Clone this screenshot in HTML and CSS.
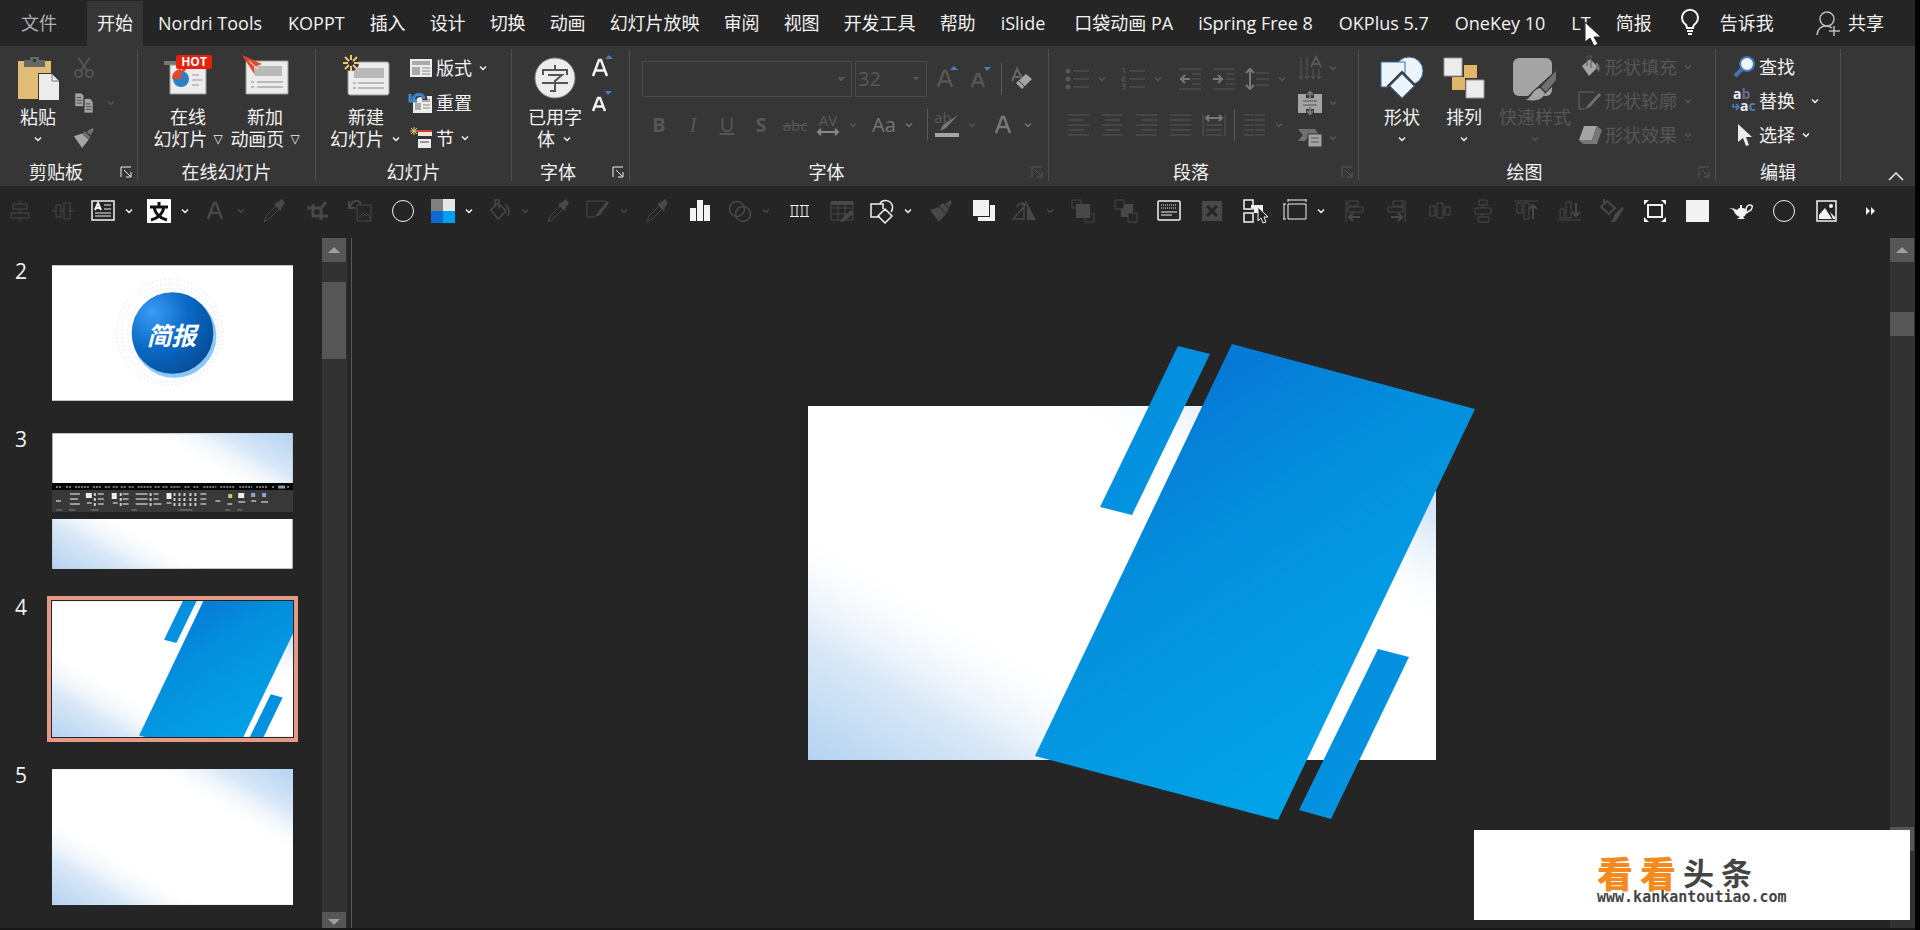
FILE: index.html
```html
<!DOCTYPE html>
<html lang="zh-CN">
<head>
    <meta charset="UTF-8">
    <meta name="viewport" content="width=device-width, initial-scale=1.0">
    <title>简报 - 演示文稿</title>
    <link rel="stylesheet" href="styles.css">
</head>
<body>
    <!-- 图标库 -->
    <svg class="sprite" aria-hidden="true">
        <defs>
            <linearGradient id="g-low" gradientUnits="userSpaceOnUse" x1="0" y1="354" x2="105" y2="174">
                <stop offset="0" stop-color="#b4d3f1"/>
                <stop offset="0.5" stop-color="#d9e8f7"/>
                <stop offset="1" stop-color="#ffffff" stop-opacity="0"/>
            </linearGradient>
            <linearGradient id="g-high" gradientUnits="userSpaceOnUse" x1="628" y1="0" x2="526" y2="171">
                <stop offset="0" stop-color="#b4d3f1"/>
                <stop offset="0.5" stop-color="#d9e8f7"/>
                <stop offset="1" stop-color="#ffffff" stop-opacity="0"/>
            </linearGradient>
            <linearGradient id="g-main" gradientUnits="userSpaceOnUse" x1="370" y1="0" x2="570" y2="310">
                <stop offset="0" stop-color="#067ad6"/>
                <stop offset="0.35" stop-color="#048fdd"/>
                <stop offset="1" stop-color="#02a2e8"/>
            </linearGradient>
            <linearGradient id="g-bar" x1="0" y1="0" x2="1" y2="1">
                <stop offset="0" stop-color="#0785db"/>
                <stop offset="1" stop-color="#029ce5"/>
            </linearGradient>
            <radialGradient id="g-ball" cx="0.25" cy="0.25" r="0.9">
                <stop offset="0" stop-color="#3b9af3"/>
                <stop offset="0.5" stop-color="#0a69c4"/>
                <stop offset="1" stop-color="#054a94"/>
            </radialGradient>
        </defs>

        <symbol id="slide-bg" viewBox="0 0 628 354">
            <rect width="628" height="354" fill="#fff"/>
            <rect width="628" height="354" fill="url(#g-low)"/>
            <rect width="628" height="354" fill="url(#g-high)"/>
        </symbol>
        <g id="slide-shapes">
            <polygon points="424,-62 667,3 470,414 227,350" fill="url(#g-main)"/>
            <polygon points="370,-60 402,-52 324,109 292,101" fill="url(#g-bar)"/>
            <polygon points="570,243 601,251 523,413 491,404" fill="url(#g-bar)"/>
        </g>

        <symbol id="chev" viewBox="0 0 12 12"><path d="M3 4.5 6 7.5 9 4.5" fill="none" stroke="currentColor" stroke-width="1.5"/></symbol>
        <symbol id="launch" viewBox="0 0 12 12"><path d="M1 11V1h10M4 4l6 6M11 6v5H6" fill="none" stroke="currentColor"/></symbol>

        <!-- 大图标 -->
        <symbol id="paste" viewBox="0 0 44 44">
            <path d="M2 5h33v38H2z" fill="#e0bd76"/><path d="M8 4h6V1h9v3h6v7H8z" fill="#666"/><path d="M17 3h3v3h-3z" fill="#363636"/>
            <path d="M22 17h16l6 7v21H22z" fill="#363636"/><path d="M23 18h13l7 7v19H23z" fill="#ececec"/><path d="M36 18v7h7" fill="none" stroke="#777"/>
        </symbol>
        <symbol id="newanim" viewBox="0 0 48 44">
            <path d="M5 5h42v33H5z" fill="#ececec" stroke="#999"/><path d="M14 10h27v10H14z" fill="#b9b9b9"/>
            <path d="M10 26h3M16 26h26M10 31h3M16 31h26" stroke="#888"/>
            <path d="M1-1l20 9-8 3 1 8z" fill="#e0492a"/><path d="M8 5l9 8" stroke="#fff"/>
        </symbol>
        <symbol id="newslide" viewBox="0 0 48 44">
            <rect x="6" y="6" width="41" height="33" rx="2" fill="#ececec" stroke="#999"/><path d="M12 12h30v10H12z" fill="#b9b9b9"/>
            <path d="M11 27h3M16 27h26M11 32h3M16 32h26" stroke="#888"/>
            <circle cx="9" cy="7" r="8" fill="#363636"/>
            <path d="M9-1v5M9 10v5M1 7h5M12 7h5M3 1l4 4M11 9l4 4M15 1l-4 4M7 9l-4 4" stroke="#efc873" stroke-width="2"/>
        </symbol>
        <symbol id="usedfont" viewBox="0 0 44 44">
            <circle cx="22" cy="22" r="20" fill="#ececec" stroke="#888"/>
            <path d="M22 9v4M10 19v-5h24v5M15 19h14l-7 6v10h-5M9 27h26" fill="none" stroke="#555" stroke-width="2"/>
        </symbol>
        <symbol id="shapes" viewBox="0 0 44 44">
            <circle cx="29" cy="15" r="14" fill="#edf4fb" stroke="#2e6da8"/><path d="M1 6h24v25H1z" fill="#edf4fb" stroke="#2e6da8"/>
            <path d="M22 16l14 14-14 14L8 30z" fill="#edf4fb" stroke="#363636" stroke-width="2"/><path d="M22 18l12 12-12 12-12-12z" fill="#edf4fb" stroke="#2e6da8"/>
        </symbol>
        <symbol id="arrange" viewBox="0 0 44 44">
            <path d="M22 9h13v13H22zM10 21h13v13H10z" fill="#e0b768"/><path d="M2 2h18v18H2zM24 24h18v18H24z" fill="#ececec" stroke="#999"/>
        </symbol>
        <symbol id="quick" viewBox="0 0 44 44">
            <rect width="39" height="38" rx="6" y="2" fill="#a4a4a4"/><path d="M44 13 40 30 25 45H10l10-10z" fill="#363636"/>
            <path d="M43 15v9L33 36l-5-5z" fill="#707070"/><path d="M27 32l5 5c-3 8-11 8-19 7 6-3 7-11 14-12z" fill="#a4a4a4"/>
        </symbol>

        <!-- 功能区小图标 -->
        <symbol id="cut" viewBox="0 0 24 24"><path d="M6 1l10 15M18 1 8 16" fill="none" stroke="currentColor" stroke-width="2"/><circle cx="6" cy="18" r="4" fill="none" stroke="currentColor" stroke-width="2"/><circle cx="18" cy="18" r="4" fill="none" stroke="currentColor" stroke-width="2"/></symbol>
        <symbol id="copy" viewBox="0 0 24 24"><path d="M2 1h7l3 3v12H2zM12 7h7l3 4v12H12z" fill="#a4a4a4" stroke="#363636"/><path d="M4 6h5M4 9h6M4 12h6M14 13h5M14 16h6M14 19h6" stroke="#444"/></symbol>
        <symbol id="painter" viewBox="0 0 24 24"><path d="M1 10l9-3 7 7-7 9z" fill="#a4a4a4"/><path d="M10 7l3-2 6 6-2 3zM15 5l6-4 2 2-4 6z" fill="#707070"/></symbol>
        <symbol id="layout" viewBox="0 0 24 24"><path d="M1 3h22v18H1z" fill="#ececec"/><path d="M3 5h18v4H3zM3 11h8v8H3z" fill="#aaa"/><path d="M13 12h8M13 15h8M13 18h8" stroke="#888"/></symbol>
        <symbol id="reset" viewBox="0 0 24 24"><path d="M4 5h19v17H4z" fill="#ececec"/><path d="M13 8h8v3h-8zM6 12h6v7H6z" fill="#aaa"/><path d="M14 14h7M14 17h7" stroke="#888"/><path d="M16 9c0-7-9-7-11-1" fill="none" stroke="#363636" stroke-width="5"/><path d="M15 8c0-6-9-6-11 0M1 3v7h7" fill="none" stroke="#3d87c9" stroke-width="3"/></symbol>
        <symbol id="section" viewBox="0 0 24 24"><path d="M9 5h14v5H9z" fill="#f7e3da"/><path d="M9 5h14" stroke="#c8472a" stroke-width="2"/><path d="M9 13h13v9H9z" fill="#ececec"/><path d="M11 16h9" stroke="#999" stroke-width="2"/><path d="M5 1v8M1 5h8M2 2l6 6M8 2l-6 6" stroke="#efc873"/></symbol>
        <symbol id="grow" viewBox="0 0 24 24"><path d="M3 20 9 4h2l6 16M5.500 14.500h9" fill="none" stroke="currentColor" stroke-width="2.500"/><path d="M15 3l4-4 4 4z" class="mark"/></symbol>
        <symbol id="shrink" viewBox="0 0 24 24"><path d="M3 20 8 7h2l5 13M5.500 15.500h7" fill="none" stroke="currentColor" stroke-width="2.500"/><path d="M15 0h7l-4 4z" class="mark"/></symbol>
        <symbol id="erase" viewBox="0 0 24 24"><path d="M2 14 7 2l5 9M4 10h6" fill="none" stroke="#666" stroke-width="2"/><path d="M6 16 16 7l6 5-10 10z" fill="#a4a4a4"/><path d="M9 14l6 6" stroke="#363636"/></symbol>
        <symbol id="bullets" viewBox="0 0 24 24"><path d="M8 4h16M8 12h16M8 20h16" stroke="currentColor"/><circle cx="3" cy="4" r="2.500" fill="currentColor"/><circle cx="3" cy="12" r="2.500" fill="currentColor"/><circle cx="3" cy="20" r="2.500" fill="currentColor"/></symbol>
        <symbol id="numbers" viewBox="0 0 24 24"><path d="M8 4h16M8 12h16M8 20h16M1 2l2-1v6M1 10h3v2H1v2h4M1 17h3v5H1M1 19h3" fill="none" stroke="currentColor"/></symbol>
        <symbol id="outdent" viewBox="0 0 24 24"><path d="M1 2h22M14 7h9M14 12h9M14 17h9M1 22h22" stroke="currentColor"/><path d="M12 12H2M7 8l-4 4 4 4" fill="none" stroke="#777" stroke-width="2"/></symbol>
        <symbol id="indent" viewBox="0 0 24 24"><path d="M1 2h22M14 7h9M14 12h9M14 17h9M1 22h22" stroke="currentColor"/><path d="M1 12h10M6 8l4 4-4 4" fill="none" stroke="#777" stroke-width="2"/></symbol>
        <symbol id="lines" viewBox="0 0 24 24"><path d="M11 6h13M11 12h13M11 18h13" stroke="currentColor"/><path d="M5 2v20M1 6l4-4 4 4M1 18l4 4 4-4" fill="none" stroke="#777" stroke-width="2"/></symbol>
        <symbol id="al" viewBox="0 0 24 24"><path d="M2 2h21M2 7h16M2 12h21M2 17h16M2 22h21" stroke="currentColor"/></symbol>
        <symbol id="ac" viewBox="0 0 24 24"><path d="M2 2h21M5 7h15M2 12h21M5 17h15M2 22h21" stroke="currentColor"/></symbol>
        <symbol id="ar" viewBox="0 0 24 24"><path d="M2 2h21M7 7h16M2 12h21M7 17h16M2 22h21" stroke="currentColor"/></symbol>
        <symbol id="aj" viewBox="0 0 24 24"><path d="M2 2h21M2 7h21M2 12h21M2 17h21M2 22h21" stroke="currentColor"/></symbol>
        <symbol id="ad" viewBox="0 0 24 24"><path d="M1 1v22M23 1v22M4 12h16M4 17h16M4 22h16" stroke="currentColor"/><path d="M4 5h16M7 2 4 5l3 3M17 2l3 3-3 3" fill="none" stroke="#777" stroke-width="2"/></symbol>
        <symbol id="cols" viewBox="0 0 24 24"><path d="M2 2h10M13 2h10M2 7h10M13 7h10M2 12h10M13 12h10M2 17h10M13 17h10M2 22h10M13 22h10" stroke="currentColor"/></symbol>
        <symbol id="textdir" viewBox="0 0 24 24"><path d="M3 1v22M9 1v22M15 13v10M21 13v10M1 20l2 3 2-3M7 20l2 3 2-3M13 20l2 3 2-3M19 20l2 3 2-3" fill="none" stroke="currentColor"/><path d="M13 11l5-10 5 10M15 8h6" fill="none" stroke="currentColor" stroke-width="2"/></symbol>
        <symbol id="textalign" viewBox="0 0 24 24"><path d="M0 3h8v4h8V3h8v19h-8v-4H8v4H0z" fill="#a4a4a4"/><path d="M5 10h14M5 14h14" stroke="#555"/><path d="M12 8V1M9 4l3-3 3 3M12 16v7M9 20l3 3 3-3" fill="none" stroke="#777" stroke-width="2"/></symbol>
        <symbol id="smart" viewBox="0 0 24 24"><path d="M0 3h17l6 8H10l-3 4H0l5-6z" fill="#707070"/><path d="M10 8h14v13H10z" fill="#a4a4a4" stroke="#363636"/><path d="M13 12h8M13 16h8" stroke="#555"/></symbol>
        <symbol id="fill" viewBox="0 0 24 24"><path d="M4 11 12 4l8 8-9 9z" fill="#a4a4a4"/><path d="M9 11V1h4v12" fill="none" stroke="#555"/><path d="M18 7q5 3 3 10l-3-4z" fill="#777"/></symbol>
        <symbol id="outline" viewBox="0 0 24 24"><path d="M16 3H1v17h6" fill="none" stroke="#666"/><path d="M21 4 10 16l-3 4 5-2L23 6z" fill="#707070"/></symbol>
        <symbol id="effect" viewBox="0 0 24 24"><path d="M6 3h13l-5 14H1z" fill="#a4a4a4"/><path d="M19 3l5 4-5 14-5-4zM1 17h13l5 4H5z" fill="#777"/></symbol>
        <symbol id="find" viewBox="0 0 24 24"><path d="M11 13 3 21" stroke="#3f75b3" stroke-width="4"/><circle cx="15" cy="9" r="7" fill="#eef5fd" stroke="#3f75b3" stroke-width="2"/></symbol>
        <symbol id="pointer" viewBox="0 0 24 24"><path d="M6 1v18l5-4 3 8 3-1-3-8h6z" fill="#ececec"/></symbol>

        <!-- 快速访问工具栏图标 -->
        <symbol id="q-alignc" viewBox="0 0 24 24"><path d="M12 1v4M12 10v4M12 19v4M5 5h14v5H5zM3 14h18v5H3z" fill="none" stroke="currentColor"/></symbol>
        <symbol id="q-alignm" viewBox="0 0 24 24"><path d="M1 12h3M10 12h3M18 12h5M5 6h5v12H5zM13 4h6v16h-6z" fill="none" stroke="currentColor"/></symbol>
        <symbol id="q-textbox" viewBox="0 0 24 24"><path d="M1 2h22v19H1z" fill="none" stroke="currentColor" stroke-width="1.500"/><path d="M4 11l3-7 3 7M5 9h4" fill="none" stroke="currentColor" stroke-width="2"/><path d="M13 6h7M13 10h7M4 14h16M4 17h16" stroke="currentColor"/></symbol>
        <symbol id="q-wen" viewBox="0 0 24 24"><path d="M0 0h24v24H0z" fill="#fff"/><path d="M12 3v4M3 8h18M7 8c1 6 5 11 13 13M17 8c-1 6-5 11-13 13" fill="none" stroke="#111" stroke-width="3"/></symbol>
        <symbol id="q-a" viewBox="0 0 24 24"><path d="M5 20 11 4h2l6 16M8 14h9" fill="none" stroke="currentColor" stroke-width="2.500"/></symbol>
        <symbol id="q-pick" viewBox="0 0 24 24"><path d="M2 23l2-6L14 7l3 3L7 20z" fill="none" stroke="currentColor"/><path d="M12 5l7 7 1-4 3-4-3-4-4 3z" fill="currentColor"/></symbol>
        <symbol id="q-crop" viewBox="0 0 24 24"><path d="M8 5v12h15M2 9h14v12M17 8l4-5" fill="none" stroke="currentColor" stroke-width="3"/></symbol>
        <symbol id="q-picreset" viewBox="0 0 24 24"><path d="M9 6h14v16H9zM11 19l4-5 3 3 2-2 3 5" fill="none" stroke="currentColor"/><path d="M13 5c-3-5-9-4-11 3M1 2v7h6" fill="none" stroke="currentColor" stroke-width="2"/></symbol>
        <symbol id="q-circle" viewBox="0 0 24 24"><circle cx="12" cy="12" r="10.500" fill="none" stroke="currentColor"/></symbol>
        <symbol id="q-color" viewBox="0 0 24 24"><path d="M0 0h12v12H0z" fill="#808080"/><path d="M12 0h12v12H12z" fill="#e6e6e6"/><path d="M0 12h12v12H0z" fill="#0a6cd0"/><path d="M12 12h12v12H12z" fill="#04a0ec"/></symbol>
        <symbol id="q-fill" viewBox="0 0 24 24"><path d="M4 11l7-7 8 8-8 8zM8 8V1h4v9M18 6q6 3 3 11" fill="none" stroke="currentColor" stroke-width="1.500"/></symbol>
        <symbol id="q-pen" viewBox="0 0 24 24"><path d="M20 2H1v16h8" fill="none" stroke="currentColor"/><path d="M21 2 12 13l-3 5 5-2 9-12z" fill="currentColor"/></symbol>
        <symbol id="q-chart" viewBox="0 0 24 24"><path d="M2 9h6v13H2zM9 1h6v21H9zM16 6h6v16h-6z" fill="currentColor"/></symbol>
        <symbol id="q-venn" viewBox="0 0 24 24"><circle cx="9" cy="10" r="7.500" fill="none" stroke="currentColor" stroke-width="1.500"/><circle cx="15" cy="15" r="7.500" fill="none" stroke="currentColor" stroke-width="1.500"/></symbol>
        <symbol id="q-grid" viewBox="0 0 24 24"><path d="M5 6v12M10 6v12M15 6v12M20 6v12M3 6.500h9M3 17.500h9M13 6.500h9M13 17.500h9" fill="none" stroke="currentColor"/></symbol>
        <symbol id="q-table" viewBox="0 0 24 24"><path d="M1 3h22v18H1zM1 9h22M1 15h22M8 6v15M15 6v15" fill="none" stroke="currentColor"/><path d="M1 2h22v4H1zM21 11l-9 8-2 4 5-1 9-8z" fill="currentColor"/></symbol>
        <symbol id="q-shapes" viewBox="0 0 24 24"><path d="M10 4a7 7 0 1 1 11 9M13 10V5H1v13h9M15 10l7 7-7 7-7-7z" fill="none" stroke="currentColor" stroke-width="1.500"/></symbol>
        <symbol id="q-brush" viewBox="0 0 24 24"><path d="M1 11l9-3 7 7-7 8zM10 7l4-3 6 6-3 4zM16 5l5-4 2 2-3 6z" fill="currentColor"/></symbol>
        <symbol id="q-layers" viewBox="0 0 24 24"><path d="M6 6h17v16H6z" fill="currentColor"/><path d="M0 0h18v18H0z" fill="#252525"/><path d="M1 1h16v16H1z" fill="currentColor"/></symbol>
        <symbol id="q-flip" viewBox="0 0 24 24"><path d="M1 20h11V8zM5 8c1-4 6-5 9-2M14 2v4h-4" fill="none" stroke="currentColor" stroke-width="1.500"/><path d="M15 4v17h9z" fill="currentColor"/></symbol>
        <symbol id="q-front" viewBox="0 0 24 24"><path d="M1 1h9v8H1zM14 15h9v8h-9z" fill="none" stroke="currentColor"/><path d="M5 5h14v14H5z" fill="currentColor"/></symbol>
        <symbol id="q-back" viewBox="0 0 24 24"><path d="M7 5h12v13H7z" fill="currentColor"/><path d="M1 1h9v9H1zM14 14h9v9h-9z" fill="#252525" stroke="currentColor"/></symbol>
        <symbol id="q-note" viewBox="0 0 24 24"><rect x="1" y="2" width="22" height="19" rx="1" fill="none" stroke="currentColor" stroke-width="1.500"/><path d="M4 6h16M4 9h16" stroke="currentColor" stroke-dasharray="1 1"/><path d="M4 13h16M4 16h11" stroke="currentColor"/></symbol>
        <symbol id="q-close" viewBox="0 0 24 24"><rect x="2" y="2" width="20" height="20" rx="1" fill="currentColor"/><path d="M7 7l10 10M17 7 7 17" stroke="#252525" stroke-width="3"/></symbol>
        <symbol id="q-select" viewBox="0 0 24 24"><path d="M1 1h9v9H1zM1 14h9v9H1z" fill="none" stroke="currentColor" stroke-width="1.500"/><path d="M8 6h12v8h-9V9H8z" fill="currentColor"/><path d="M15 8v14l3-3 2 5 3-1-2-5h4z" fill="#252525" stroke="currentColor"/></symbol>
        <symbol id="q-size" viewBox="0 0 24 24"><path d="M5 5h18v15H5zM5 1h18M5 0v3M23 0v3M1 5v15M0 5h3M0 20h3" fill="none" stroke="currentColor"/></symbol>
        <symbol id="q-left" viewBox="0 0 24 24"><path d="M4 1v22M6 2h10v5H6zM6 8h15v5H6z" fill="none" stroke="currentColor"/><path d="M6 18h12M11 14l-4 4 4 4" fill="none" stroke="currentColor" stroke-width="2"/></symbol>
        <symbol id="q-right" viewBox="0 0 24 24"><path d="M20 1v22M8 2h10v5H8zM3 8h15v5H3z" fill="none" stroke="currentColor"/><path d="M6 18h12M13 14l4 4-4 4" fill="none" stroke="currentColor" stroke-width="2"/></symbol>
        <symbol id="q-disth" viewBox="0 0 24 24"><path d="M2 7h5v10H2zM9 4h6v15H9zM17 8h5v8h-5zM7 12h2M15 12h2" fill="none" stroke="currentColor"/></symbol>
        <symbol id="q-distv" viewBox="0 0 24 24"><path d="M8 1h8v5H8zM4 9h16v6H4zM7 18h11v5H7zM12 6v3M12 15v3" fill="none" stroke="currentColor"/></symbol>
        <symbol id="q-top" viewBox="0 0 24 24"><path d="M0 2h24M3 4h5v10H3zM10 4h5v16h-5z" fill="none" stroke="currentColor"/><path d="M19 20V6M15 10l4-4 4 4" fill="none" stroke="currentColor" stroke-width="2"/></symbol>
        <symbol id="q-bottom" viewBox="0 0 24 24"><path d="M0 21h24M3 10h4v9H3zM9 3h5v16H9z" fill="none" stroke="currentColor"/><path d="M19 4v13M15 13l4 4 4-4" fill="none" stroke="currentColor" stroke-width="2"/></symbol>
        <symbol id="q-fillpen" viewBox="0 0 24 24"><path d="M1 8l6-6 8 7-6 6zM4 5V0" fill="none" stroke="currentColor" stroke-width="2"/><path d="M24 9l-6 10q-2 5-8 4 4-3 4-7l8-8z" fill="currentColor"/></symbol>
        <symbol id="q-frame" viewBox="0 0 24 24"><path d="M5 6h14v12H5z" fill="none" stroke="currentColor" stroke-width="2"/><path d="M1 1h5L1 6zM23 1v5l-5-5zM1 23v-5l5 5zM23 23h-5l5-5z" fill="currentColor"/></symbol>
        <symbol id="q-square" viewBox="0 0 24 24"><path d="M0 1h23v22H0z" fill="currentColor"/></symbol>
        <symbol id="q-lamp" viewBox="0 0 24 24"><path d="M0 9q5 0 8 2 1-2 3-2V6h2v3q4 0 5 3-1 5-4 6l2 2H8l3-2q-5-2-6-6-1-2-5-3z" fill="currentColor"/><path d="M17 12q0-6 4-6t1 5l-5 3" fill="none" stroke="currentColor" stroke-width="1.500"/></symbol>
        <symbol id="q-image" viewBox="0 0 24 24"><path d="M2 2h19v20H2z" fill="none" stroke="currentColor" stroke-width="1.500"/><path d="M4 20v-4l6-7 7 11zM15 13l5 5v2h-2z" fill="currentColor"/><circle cx="16" cy="7" r="2" fill="currentColor"/></symbol>
        <symbol id="q-more" viewBox="0 0 24 24"><path d="M8 8v8l4-4zM13 8v8l4-4z" fill="currentColor"/></symbol>
    </svg>

    <div class="app">
        <nav class="tabs" aria-label="功能区选项卡">
            <button class="tab file">文件</button>
            <button class="tab active">开始</button>
            <button class="tab latin">Nordri Tools</button>
            <button class="tab latin">KOPPT</button>
            <button class="tab">插入</button>
            <button class="tab">设计</button>
            <button class="tab">切换</button>
            <button class="tab">动画</button>
            <button class="tab">幻灯片放映</button>
            <button class="tab">审阅</button>
            <button class="tab">视图</button>
            <button class="tab">开发工具</button>
            <button class="tab">帮助</button>
            <button class="tab latin">iSlide</button>
            <button class="tab plugin">口袋动画 PA</button>
            <button class="tab latin">iSpring Free 8</button>
            <button class="tab latin">OKPlus 5.7</button>
            <button class="tab latin">OneKey 10</button>
            <button class="tab latin hovered">LT
                <svg class="cursor" viewBox="0 0 18 26" aria-hidden="true"><path d="M1 1v20l5-4 4 8 4-2-4-7h7z" fill="#fff" stroke="#222"/></svg>
            </button>
            <button class="tab">简报</button>
            <button class="tab tell">
                <svg class="bulb" viewBox="0 0 20 26" aria-hidden="true"><path d="M7 18q0-3-3-5a8 8 0 1 1 12 0q-3 2-3 5zM7 21h6M8 24h4" fill="none" stroke="currentColor" stroke-width="2"/></svg>告诉我
            </button>
            <button class="tab share">
                <svg class="person" viewBox="0 0 24 26" aria-hidden="true"><circle cx="11" cy="9" r="7" fill="none" stroke="#bbb" stroke-width="1.500"/><path d="M1 25q1-9 9-9 4 0 6 2M18 16v10M13 21h11" fill="none" stroke="#bbb" stroke-width="1.500"/></svg>共享
            </button>
        </nav>

        <div class="ribbon">
            <section class="group clipboard">
                <div class="body">
                    <button class="big"><svg class="art"><use href="#paste"/></svg><span>粘贴</span><svg class="chev"><use href="#chev"/></svg></button>
                    <div class="stack dim">
                        <button class="row" aria-label="剪切"><svg class="ico"><use href="#cut"/></svg></button>
                        <button class="row" aria-label="复制"><svg class="ico"><use href="#copy"/></svg><svg class="chev"><use href="#chev"/></svg></button>
                        <button class="row" aria-label="格式刷"><svg class="ico"><use href="#painter"/></svg></button>
                    </div>
                </div>
                <div class="caption"><h2>剪贴板</h2><button class="launch" aria-label="剪贴板选项"><svg><use href="#launch"/></svg></button></div>
            </section>

            <section class="group online">
                <div class="body">
                    <button class="big">
                        <svg class="art wide" viewBox="0 0 48 44">
                            <path d="M0 5h44v4H0z" fill="#777"/><path d="M6 9h36v29H6z" fill="#ececec" stroke="#999"/>
                            <circle cx="17" cy="23" r="8" fill="#2f7fc4"/><path d="M17 23V13a9 9 0 0 0-9 10z" fill="#e0492a"/><path d="M20 10l-7 12 9-8z" fill="#e0492a"/>
                            <path d="M28 19h7M28 24h11M28 29h7" stroke="#999"/>
                            <rect x="12" y="-1" width="36" height="14" rx="2" fill="#e6210d"/>
                            <text x="30" y="10" text-anchor="middle" class="hot">HOT</text>
                        </svg>
                        <span>在线</span><span>幻灯片 <i>▽</i></span>
                    </button>
                    <button class="big"><svg class="art wide"><use href="#newanim"/></svg><span>新加</span><span>动画页 <i>▽</i></span></button>
                </div>
                <div class="caption"><h2>在线幻灯片</h2></div>
            </section>

            <section class="group slides">
                <div class="body">
                    <button class="big"><svg class="art wide"><use href="#newslide"/></svg><span>新建</span><span>幻灯片 <svg class="chev"><use href="#chev"/></svg></span></button>
                    <div class="stack">
                        <button class="row"><svg class="ico"><use href="#layout"/></svg>版式<svg class="chev"><use href="#chev"/></svg></button>
                        <button class="row"><svg class="ico"><use href="#reset"/></svg>重置</button>
                        <button class="row"><svg class="ico"><use href="#section"/></svg>节<svg class="chev"><use href="#chev"/></svg></button>
                    </div>
                </div>
                <div class="caption"><h2>幻灯片</h2></div>
            </section>

            <section class="group used">
                <div class="body">
                    <button class="big"><svg class="art"><use href="#usedfont"/></svg><span>已用字</span><span>体 <svg class="chev"><use href="#chev"/></svg></span></button>
                    <div class="stack">
                        <button class="row" aria-label="放大字号"><svg class="ico"><use href="#grow"/></svg></button>
                        <button class="row" aria-label="缩小字号"><svg class="ico"><use href="#shrink"/></svg></button>
                    </div>
                </div>
                <div class="caption"><h2>字体</h2><button class="launch" aria-label="字体选项"><svg><use href="#launch"/></svg></button></div>
            </section>

            <section class="group font">
                <div class="tools dim">
                    <div class="line">
                        <select class="box family" aria-label="字体" disabled><option></option></select>
                        <select class="box size" aria-label="字号" disabled><option>32</option></select>
                        <button class="tool" aria-label="增大字号"><svg class="ico"><use href="#grow"/></svg></button>
                        <button class="tool" aria-label="减小字号"><svg class="ico"><use href="#shrink"/></svg></button>
                        <span class="bar"></span>
                        <button class="tool" aria-label="清除格式"><svg class="ico"><use href="#erase"/></svg></button>
                    </div>
                    <div class="line">
                        <button class="tool"><b>B</b></button>
                        <button class="tool serif"><em>I</em></button>
                        <button class="tool"><u>U</u></button>
                        <button class="tool"><b>S</b></button>
                        <button class="tool small"><s>abc</s></button>
                        <button class="tool menu" aria-label="字符间距"><svg class="ico" viewBox="0 0 24 24"><text x="12" y="13" text-anchor="middle" class="glyph">AV</text><path d="M2 19h20M5 16l-3 3 3 3M19 16l3 3-3 3" fill="none" stroke="#888" stroke-width="2"/></svg><svg class="chev"><use href="#chev"/></svg></button>
                        <button class="tool menu lit">Aa<svg class="chev"><use href="#chev"/></svg></button>
                        <span class="bar"></span>
                        <button class="tool menu" aria-label="突出显示"><svg class="ico" viewBox="0 0 24 24"><text x="8" y="10" text-anchor="middle" class="glyph">ab</text><path d="M23 2 11 15l-6 3 3-6z" fill="#777"/><path d="M0 20h24v4H0z" fill="#a4a4a4"/></svg><svg class="chev"><use href="#chev"/></svg></button>
                        <button class="tool menu lit" aria-label="字体颜色"><svg class="ico"><use href="#q-a"/></svg><svg class="chev"><use href="#chev"/></svg></button>
                    </div>
                </div>
                <div class="caption"><h2>字体</h2><button class="launch dim" aria-label="字体选项"><svg><use href="#launch"/></svg></button></div>
            </section>

            <section class="group para">
                <div class="body">
                    <div class="tools dim">
                        <div class="line">
                            <button class="tool menu" aria-label="项目符号"><svg class="ico"><use href="#bullets"/></svg><svg class="chev"><use href="#chev"/></svg></button>
                            <button class="tool menu" aria-label="编号"><svg class="ico"><use href="#numbers"/></svg><svg class="chev"><use href="#chev"/></svg></button>
                            <button class="tool" aria-label="减少缩进"><svg class="ico"><use href="#outdent"/></svg></button>
                            <button class="tool" aria-label="增加缩进"><svg class="ico"><use href="#indent"/></svg></button>
                            <button class="tool menu" aria-label="行距"><svg class="ico"><use href="#lines"/></svg><svg class="chev"><use href="#chev"/></svg></button>
                        </div>
                        <div class="line">
                            <button class="tool" aria-label="左对齐"><svg class="ico"><use href="#al"/></svg></button>
                            <button class="tool" aria-label="居中"><svg class="ico"><use href="#ac"/></svg></button>
                            <button class="tool" aria-label="右对齐"><svg class="ico"><use href="#ar"/></svg></button>
                            <button class="tool" aria-label="两端对齐"><svg class="ico"><use href="#aj"/></svg></button>
                            <button class="tool" aria-label="分散对齐"><svg class="ico"><use href="#ad"/></svg></button>
                            <span class="bar"></span>
                            <button class="tool menu" aria-label="分栏"><svg class="ico"><use href="#cols"/></svg><svg class="chev"><use href="#chev"/></svg></button>
                        </div>
                    </div>
                    <div class="stack dim">
                        <button class="row" aria-label="文字方向"><svg class="ico"><use href="#textdir"/></svg><svg class="chev"><use href="#chev"/></svg></button>
                        <button class="row" aria-label="对齐文本"><svg class="ico"><use href="#textalign"/></svg><svg class="chev"><use href="#chev"/></svg></button>
                        <button class="row" aria-label="转换为 SmartArt"><svg class="ico"><use href="#smart"/></svg><svg class="chev"><use href="#chev"/></svg></button>
                    </div>
                </div>
                <div class="caption"><h2>段落</h2><button class="launch dim" aria-label="段落选项"><svg><use href="#launch"/></svg></button></div>
            </section>

            <section class="group draw">
                <div class="body">
                    <button class="big"><svg class="art"><use href="#shapes"/></svg><span>形状</span><svg class="chev"><use href="#chev"/></svg></button>
                    <button class="big"><svg class="art"><use href="#arrange"/></svg><span>排列</span><svg class="chev"><use href="#chev"/></svg></button>
                    <button class="big dim"><svg class="art"><use href="#quick"/></svg><span>快速样式</span><svg class="chev"><use href="#chev"/></svg></button>
                    <div class="stack dim">
                        <button class="row"><svg class="ico"><use href="#fill"/></svg>形状填充<svg class="chev"><use href="#chev"/></svg></button>
                        <button class="row"><svg class="ico"><use href="#outline"/></svg>形状轮廓<svg class="chev"><use href="#chev"/></svg></button>
                        <button class="row"><svg class="ico"><use href="#effect"/></svg>形状效果<svg class="chev"><use href="#chev"/></svg></button>
                    </div>
                </div>
                <div class="caption"><h2>绘图</h2><button class="launch dim" aria-label="绘图选项"><svg><use href="#launch"/></svg></button></div>
            </section>

            <section class="group edit">
                <div class="body">
                    <div class="stack">
                        <button class="row"><svg class="ico"><use href="#find"/></svg>查找</button>
                        <button class="row far"><svg class="ico" viewBox="0 0 24 24"><text x="1" y="10" class="rep">a<tspan fill="#6a6a94">b</tspan></text><text x="8" y="22" class="rep">a<tspan fill="#4a7fc0">c</tspan></text><path d="M1 15v3h6M4 15l3 3-3 3" fill="none" stroke="#4a7fc0" stroke-width="1.500"/></svg>替换<svg class="chev"><use href="#chev"/></svg></button>
                        <button class="row"><svg class="ico"><use href="#pointer"/></svg>选择<svg class="chev"><use href="#chev"/></svg></button>
                    </div>
                </div>
                <div class="caption"><h2>编辑</h2></div>
            </section>

            <button class="collapse" aria-label="折叠功能区"><svg viewBox="0 0 16 10"><path d="M1 9l7-7 7 7" fill="none" stroke="currentColor" stroke-width="1.500"/></svg></button>
        </div>

        <div class="quickbar" id="quickbar"></div>

        <main class="workspace">
            <aside class="panel">
                <ol class="thumbs">
                    <li><span class="num">2</span>
                        <svg class="thumb" viewBox="0 0 242 136">
                            <rect width="242" height="136" fill="#fff"/>
                            <g fill="none" stroke="#a9c9ea" stroke-dasharray="1 3" opacity="0.7">
                                <circle cx="121" cy="68" r="45"/><circle cx="119" cy="68" r="49"/><circle cx="118" cy="67" r="53"/>
                            </g>
                            <circle cx="123" cy="71" r="42" fill="#8cc6fb"/>
                            <circle cx="121" cy="68" r="41" fill="url(#g-ball)"/>
                            <text x="120" y="80" text-anchor="middle" class="ball-text">简报</text>
                        </svg>
                    </li>
                    <li><span class="num">3</span>
                        <svg class="thumb" viewBox="0 0 242 136">
                            <use href="#slide-bg" width="242" height="136"/>
                            <path d="M0 50h242v36H0z" fill="#232323"/><path d="M0 50h242v7H0z" fill="#050505"/><path d="M0 57h242v22H0z" fill="#383838"/>
                            <path d="M4 54h5M14 54h5M23 54h15M41 54h9M53 54h5M61 54h5M69 54h5M77 54h5M86 54h14M103 54h5M111 54h5M119 54h10M133 54h5M142 54h6M152 54h13M169 54h15M188 54h13M205 54h12M221 54h3M236 54h3" stroke="#777" stroke-width="2" stroke-dasharray="2 1"/>
                            <path d="M227 54h7" stroke="#999" stroke-width="3"/>
                            <path d="M18 61h10M18 66h8M18 71h10M46 61h6M46 66h6M46 71h6M71 61h6M71 66h6M71 71h6M84 61h12M84 66h12M84 71h12M102 61h5M102 66h5M102 71h8M149 61h6M149 66h6M149 71h6M4 68h5M35 70h5M61 70h5M115 70h5M164 68h5M176 71h5M187 69h7M200 68h5M210 69h7" stroke="#999" stroke-width="2"/>
                            <path d="M34 60h6v5h-6zM60 60h5v6h-5zM115 60h5v6h-5zM187 60h6v5h-6z" fill="#eee"/>
                            <path d="M43 60v13M123 60v13M128 60v13M133 60v13M139 60v13M144 60v13M69 60v13M99 60v13" stroke="#ccc" stroke-width="2" stroke-dasharray="3 2"/>
                            <path d="M17 77h6M39 77h8M80 77h5M128 77h13M174 77h5M186 77h5M4 77h6" stroke="#888"/>
                            <path d="M200 60h4v4h-4zM211 60h4v4h-4z" fill="#88a8cc"/><path d="M177 61h4v4h-4z" fill="#d8c46c"/>
                        </svg>
                    </li>
                    <li class="selected"><span class="num">4</span>
                        <svg class="thumb" viewBox="0 0 628 354">
                            <use href="#slide-bg" width="628" height="354"/>
                            <use href="#slide-shapes"/>
                        </svg>
                    </li>
                    <li><span class="num">5</span>
                        <svg class="thumb" viewBox="0 0 628 354"><use href="#slide-bg" width="628" height="354"/></svg>
                    </li>
                </ol>
                <div class="scroll">
                    <button class="up" aria-label="向上滚动"></button>
                    <div class="handle"></div>
                    <button class="down" aria-label="向下滚动"></button>
                </div>
            </aside>
            <section class="canvas">
                <svg class="slide" viewBox="0 0 628 354" role="img" aria-label="幻灯片 4">
                    <use href="#slide-bg" width="628" height="354"/>
                    <use href="#slide-shapes"/>
                </svg>
            </section>
            <div class="scroll main-scroll">
                <button class="up" aria-label="向上滚动"></button>
                <div class="handle"></div>
                <button class="down" aria-label="下一页"></button>
            </div>
        </main>
    </div>

    <div class="brand">
        <p class="brand-name"><b>看</b><b>看</b><span>头</span><span>条</span></p>
        <p class="brand-url">www.kankantoutiao.com</p>
    </div>

    <script src="quickbar.js"></script>
</body>
</html>
```
FILE: styles.css
```css
* {
    margin: 0;
    padding: 0;
    box-sizing: border-box;
}

body {
    background: #000;
    color: #f2f2f2;
    font-family: 'Open Sans', 'Noto Sans CJK SC', sans-serif;
    font-size: 18px;
    line-height: 22px;
    overflow: hidden;
}

button {
    background: none;
    border: 0;
    color: inherit;
    font: inherit;
    white-space: nowrap;
}

svg {
    display: block;
    flex: none;
    overflow: visible;
}

symbol {
    overflow: visible;
}

.sprite {
    position: absolute;
    width: 0;
    height: 0;
    overflow: hidden;
}

.app {
    display: flex;
    flex-direction: column;
    height: 100vh;
    margin-right: 5px;
    background: #252525;
    border-bottom: 2px solid #171717;
}

/* 选项卡 */
.tabs {
    display: flex;
    gap: 4px;
    height: 46px;
    padding: 1px 21px 0 11px;
}

.tab {
    display: flex;
    align-items: center;
    padding: 0 10px 2px;
}

.tab.latin {
    padding: 0 11px 2px;
}

.tab.file {
    margin-right: 16px;
    color: #b0b0b0;
}

.tab.active {
    background: #363636;
}

.tab.plugin {
    margin-left: 4px;
}

.tab.hovered {
    position: relative;
}

.cursor {
    position: absolute;
    left: 24px;
    top: 20px;
    width: 18px;
    height: 26px;
}

.tab.tell {
    gap: 20px;
    margin-left: 4px;
}

.bulb {
    width: 20px;
    height: 26px;
}

.tab.share {
    gap: 8px;
    margin-left: auto;
}

.person {
    width: 24px;
    height: 26px;
}

/* 功能区 */
.ribbon {
    display: flex;
    height: 140px;
    background: #363636;
}

.group {
    display: flex;
    flex-direction: column;
    flex: none;
    border-right: 1px solid #505050;
    border-image: linear-gradient(#363636 4px, #505050 4px, #505050 134px, #363636 134px) 1;
}

.body {
    display: flex;
    flex: 1;
}

.clipboard { width: 138px; }
.online { width: 178px; }
.slides { width: 196px; }
.used { width: 118px; }
.font { width: 419px; }
.para { width: 310px; }
.draw { width: 357px; }
.edit { width: 125px; }

.caption {
    display: flex;
    align-items: center;
    height: 28px;
    padding-bottom: 1px;
}

.caption h2 {
    flex: 1;
    font-size: 18px;
    font-weight: 400;
    text-align: center;
}

.launch {
    width: 12px;
    margin-right: 5px;
    margin-left: 8px;
}

.launch svg {
    width: 12px;
    height: 12px;
}

.big {
    display: flex;
    flex-direction: column;
    align-items: center;
    padding-top: 10px;
}

.big span {
    display: flex;
    align-items: center;
    gap: 6px;
}

.big > .chev {
    margin-top: 5px;
}

.big i {
    font-family: 'DejaVu Sans', sans-serif;
    font-size: 12px;
    font-style: normal;
}

.art {
    width: 44px;
    height: 44px;
    margin-bottom: 6px;
}

.art.wide {
    width: 48px;
}

.hot {
    fill: #fff;
    font: bold 12px 'Open Sans', sans-serif;
}

.chev {
    width: 12px;
    height: 12px;
}

.ico {
    width: 24px;
    height: 24px;
}

.stack {
    display: flex;
    flex-direction: column;
    padding-top: 4px;
}

.row {
    display: flex;
    align-items: center;
    gap: 3px;
    height: 35px;
}

.row .chev {
    margin-left: 2px;
}

.row.far .chev {
    margin-left: 11px;
}

.clipboard .body {
    gap: 13px;
    padding-left: 16px;
}

.clipboard .ico {
    width: 22px;
    height: 22px;
}

.clipboard .row .chev {
    margin-left: 7px;
}

.online .big {
    width: 77px;
}

.online .body {
    justify-content: center;
}

.slides .body {
    gap: 7px;
    padding-left: 14px;
}

.used .body {
    gap: 8px;
    padding-left: 16px;
}

.mark {
    fill: #4a7fc0;
}

.dim {
    color: #565656;
}

.dim .mark {
    fill: #666;
}

.tools {
    flex: 1;
    padding: 15px 0 0 12px;
}

.para .tools {
    flex: none;
    width: 249px;
}

.line {
    display: flex;
    align-items: center;
    height: 36px;
    margin-bottom: 10px;
}

.box {
    appearance: none;
    height: 36px;
    margin-right: 3px;
    border: 1px solid #4a4a4a;
    border-radius: 0;
    background: conic-gradient(from -45deg at 50% 100%, #555 90deg, transparent 0) right 6px center / 8px 4px no-repeat;
    background-color: #363636;
    color: #5a5a5a;
    font: inherit;
    font-size: 20px;
    opacity: 1;
    padding: 0 2px;
}

.family { width: 210px; }
.size { width: 72px; }

.tool {
    display: flex;
    align-items: center;
    justify-content: center;
    width: 34px;
    height: 34px;
    font-size: 20px;
}

.tool.menu {
    justify-content: flex-start;
    gap: 7px;
    width: 56px;
    padding-left: 4px;
}

.tool.lit {
    color: #777;
}

.tool.small {
    font-size: 15px;
}

.tool.serif {
    font-family: 'Liberation Serif', serif;
}

.bar {
    width: 1px;
    height: 32px;
    margin: 0 3px;
    background: #5c5c5c;
}

.glyph {
    fill: #5a5a5a;
    font: 15px 'Open Sans', sans-serif;
}

.rep {
    fill: #ececec;
    font: bold 14px 'Open Sans', sans-serif;
}

.draw .body {
    padding-left: 12px;
}

.draw .big {
    width: 62px;
}

.draw .big.dim {
    width: 80px;
}

.draw .stack {
    padding-left: 3px;
}

.draw .row,
.edit .row {
    height: 34px;
}

.edit .body {
    padding-left: 16px;
}

.collapse {
    align-self: flex-end;
    margin: 0 11px 5px auto;
}

.collapse svg {
    width: 16px;
    height: 10px;
}

/* 快速访问工具栏 */
.quickbar {
    display: flex;
    align-items: center;
    height: 52px;
    margin-left: -2px;
    padding-bottom: 2px;
    overflow: hidden;
}

.quick {
    display: flex;
    align-items: center;
    justify-content: center;
    flex: none;
    width: 43px;
    height: 40px;
}

.quick.menu {
    justify-content: flex-start;
    gap: 8px;
    width: 56px;
    padding-left: 7px;
}

.quick.off {
    color: #484848;
}

/* 工作区 */
.workspace {
    display: flex;
    flex: 1;
    min-height: 0;
}

.panel {
    display: flex;
    justify-content: space-between;
    width: 352px;
    padding-right: 4px;
    border-right: 1px solid #585858;
}

.thumbs {
    display: flex;
    flex-direction: column;
    gap: 32px;
    padding-top: 27px;
    list-style: none;
}

.thumbs li {
    display: flex;
    height: 136px;
}

.num {
    width: 52px;
    padding-left: 15px;
    font-size: 21px;
    line-height: 12px;
}

.thumb {
    width: 241px;
    height: 136px;
    overflow: hidden;
}

.selected .thumb {
    outline: 4px solid #e59a87;
    outline-offset: 1px;
}

.ball-text {
    fill: #fff;
    font: italic 700 25px 'Noto Sans CJK SC', sans-serif;
}

.scroll {
    display: flex;
    flex-direction: column;
    width: 25px;
    padding-right: 1px;
    background: #323232;
}

.scroll .up,
.scroll .down {
    height: 24px;
    background: #565656;
}

.scroll .up::before,
.scroll .down::before {
    content: '';
    display: block;
    width: 12px;
    height: 6px;
    margin: 0 auto;
    background: #a0a0a0;
    clip-path: polygon(50% 0, 100% 100%, 0 100%);
}

.scroll .down {
    height: 16px;
    padding-top: 4px;
    margin-top: auto;
}

.scroll .down::before {
    clip-path: polygon(0 0, 100% 0, 50% 100%);
}

.handle {
    height: 77px;
    margin-top: 20px;
    background: #565656;
}

.main-scroll .handle {
    height: 24px;
    margin-top: 50px;
}

.main-scroll .down {
    height: 24px;
    margin-bottom: 77px;
}

.canvas {
    display: flex;
    align-items: center;
    justify-content: center;
    flex: 1;
    padding-left: 2px;
}

.slide {
    width: 628px;
    height: 354px;
}

/* 角标 */
.brand {
    position: fixed;
    right: 10px;
    bottom: 10px;
    width: 436px;
    height: 90px;
    padding: 24px 0 0 123px;
    background: #fff;
    color: #444;
}

.brand-name {
    display: flex;
    gap: 7px;
    font: 700 31px/36px 'Noto Sans CJK SC', sans-serif;
}

.brand-name b {
    color: #f58a1f;
    font-size: 36px;
}

.brand-url {
    font: bold 15px/14px 'DejaVu Sans Mono', monospace;
}
```
FILE: quickbar.js
```javascript
// [图标, 名称, 是否可用, 是否带下拉]
const items = [
    ['q-alignc', '水平居中', 0, 0],
    ['q-alignm', '垂直居中', 0, 0],
    ['q-textbox', '文本框', 1, 1],
    ['q-wen', '文字', 1, 1],
    ['q-a', '字体颜色', 0, 1],
    ['q-pick', '取色器', 0, 0],
    ['q-crop', '裁剪', 0, 0],
    ['q-picreset', '重设图片', 0, 0],
    ['q-circle', '圆形', 1, 0],
    ['q-color', '主题颜色', 1, 1],
    ['q-fill', '形状填充', 0, 1],
    ['q-pick', '填充取色', 0, 0],
    ['q-pen', '形状轮廓', 0, 1],
    ['q-pick', '轮廓取色', 0, 0],
    ['q-chart', '图表', 1, 0],
    ['q-venn', '合并形状', 0, 1],
    ['q-grid', '参考线', 1, 0],
    ['q-table', '绘制表格', 0, 0],
    ['q-shapes', '形状', 1, 1],
    ['q-brush', '格式刷', 0, 0],
    ['q-layers', '阴影', 1, 0],
    ['q-flip', '旋转', 0, 1],
    ['q-front', '上移一层', 0, 0],
    ['q-back', '下移一层', 0, 0],
    ['q-note', '备注', 1, 0],
    ['q-close', '删除', 0, 0],
    ['q-select', '选择窗格', 1, 0],
    ['q-size', '大小', 1, 1],
    ['q-left', '左对齐', 0, 0],
    ['q-right', '右对齐', 0, 0],
    ['q-disth', '横向分布', 0, 0],
    ['q-distv', '纵向分布', 0, 0],
    ['q-top', '顶端对齐', 0, 0],
    ['q-bottom', '底端对齐', 0, 0],
    ['q-fillpen', '填充样式', 0, 0],
    ['q-frame', '适应窗口', 1, 0],
    ['q-square', '矩形', 1, 0],
    ['q-lamp', '神灯', 1, 0],
    ['q-circle', '椭圆', 1, 0],
    ['q-image', '图片', 1, 0],
    ['q-more', '更多', 1, 0]
];

document.getElementById('quickbar').innerHTML = items.map(([icon, name, on, menu]) => `
    <button class="quick${menu ? ' menu' : ''}${on ? '' : ' off'}" aria-label="${name}">
        <svg class="ico"><use href="#${icon}"/></svg>
        ${menu ? '<svg class="chev"><use href="#chev"/></svg>' : ''}
    </button>`).join('');
```
